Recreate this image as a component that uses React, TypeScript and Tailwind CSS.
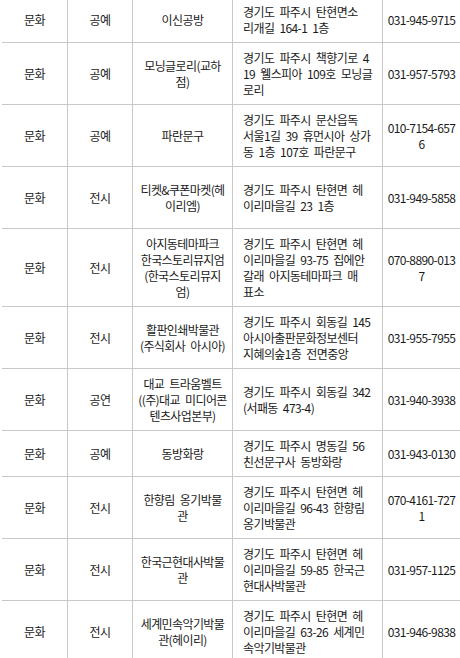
type Row = {
  cat: string;
  kind: string;
  name: string[];
  addr: string[];
  tel: string[];
  tall?: boolean;
};

// line breaks follow the screenshot exactly
const rows: Row[] = [
  { cat: "문화", kind: "공예", name: ["이신공방"], addr: ["경기도 파주시 탄현면소", "리개길 164-1 1층"], tel: ["031-945-9715"] },
  { cat: "문화", kind: "공예", name: ["모닝글로리(교하", "점)"], addr: ["경기도 파주시 책향기로 4", "19 웰스피아 109호 모닝글", "로리"], tel: ["031-957-5793"] },
  { cat: "문화", kind: "공예", name: ["파란문구"], addr: ["경기도 파주시 문산읍독", "서울1길 39 휴먼시아 상가", "동 1층 107호 파란문구"], tel: ["010-7154-657", "6"] },
  { cat: "문화", kind: "전시", name: ["티켓&쿠폰마켓(헤", "이리엠)"], addr: ["경기도 파주시 탄현면 헤", "이리마을길 23 1층"], tel: ["031-949-5858"], tall: true },
  { cat: "문화", kind: "전시", name: ["아지동테마파크", "한국스토리뮤지엄", "(한국스토리뮤지", "엄)"], addr: ["경기도 파주시 탄현면 헤", "이리마을길 93-75 집에안", "갈래 아지동테마파크 매", "표소"], tel: ["070-8890-013", "7"] },
  { cat: "문화", kind: "전시", name: ["활판인쇄박물관", "(주식회사 아시아)"], addr: ["경기도 파주시 회동길 145", "아시아출판문화정보센터", "지혜의숲1층 전면중앙"], tel: ["031-955-7955"] },
  { cat: "문화", kind: "공연", name: ["대교 트라움벨트", "((주)대교 미디어콘", "텐츠사업본부)"], addr: ["경기도 파주시 회동길 342", "(서패동 473-4)"], tel: ["031-940-3938"] },
  { cat: "문화", kind: "공예", name: ["동방화랑"], addr: ["경기도 파주시 명동길 56", "친선문구사 동방화랑"], tel: ["031-943-0130"] },
  { cat: "문화", kind: "전시", name: ["한향림 옹기박물", "관"], addr: ["경기도 파주시 탄현면 헤", "이리마을길 96-43 한향림", "옹기박물관"], tel: ["070-4161-727", "1"] },
  { cat: "문화", kind: "전시", name: ["한국근현대사박물", "관"], addr: ["경기도 파주시 탄현면 헤", "이리마을길 59-85 한국근", "현대사박물관"], tel: ["031-957-1125"] },
  { cat: "문화", kind: "전시", name: ["세계민속악기박물", "관(헤이리)"], addr: ["경기도 파주시 탄현면 헤", "이리마을길 63-26 세계민", "속악기박물관"], tel: ["031-946-9838"] },
];

function Lines({ lines }: { lines: string[] }) {
  return (
    <>
      {lines.map((l, i) => (
        <span key={i} className="block whitespace-nowrap">
          {l}
        </span>
      ))}
    </>
  );
}

export default function App() {
  return (
    <main
      className="min-h-screen overflow-hidden bg-white text-[12px] leading-4 text-[#1a1a1a] tracking-[-0.6px] [word-spacing:3px]"
      style={{ fontFamily: '"Noto Sans CJK KR", "Noto Sans", sans-serif' }}
    >
      <div className="-mt-[3px] ml-[2px] w-[458px]">
        {rows.map((r, i) => (
          <div
            key={i}
            className={
              "grid grid-cols-[66px_65px_100px_150px_77px] border-b border-[#c8c8c8] " +
              (r.tall ? "min-h-[62px]" : "")
            }
          >
            <div className="flex items-center justify-center border-r border-[#c8c8c8] pt-[7px] pb-[6px] text-center">
              {r.cat}
            </div>
            <div className="flex items-center justify-center border-r border-[#c8c8c8] pt-[7px] pb-[6px] text-center">
              {r.kind}
            </div>
            <div className="flex flex-col items-center justify-center border-r border-[#c8c8c8] pt-[7px] pb-[6px] text-center">
              <Lines lines={r.name} />
            </div>
            <div className="flex flex-col justify-center border-r border-[#c8c8c8] pt-[7px] pb-[6px] pl-[10px]">
              <Lines lines={r.addr} />
            </div>
            <div className="flex flex-col items-center justify-center pt-[7px] pb-[6px] text-center">
              <Lines lines={r.tel} />
            </div>
          </div>
        ))}
      </div>
    </main>
  );
}
